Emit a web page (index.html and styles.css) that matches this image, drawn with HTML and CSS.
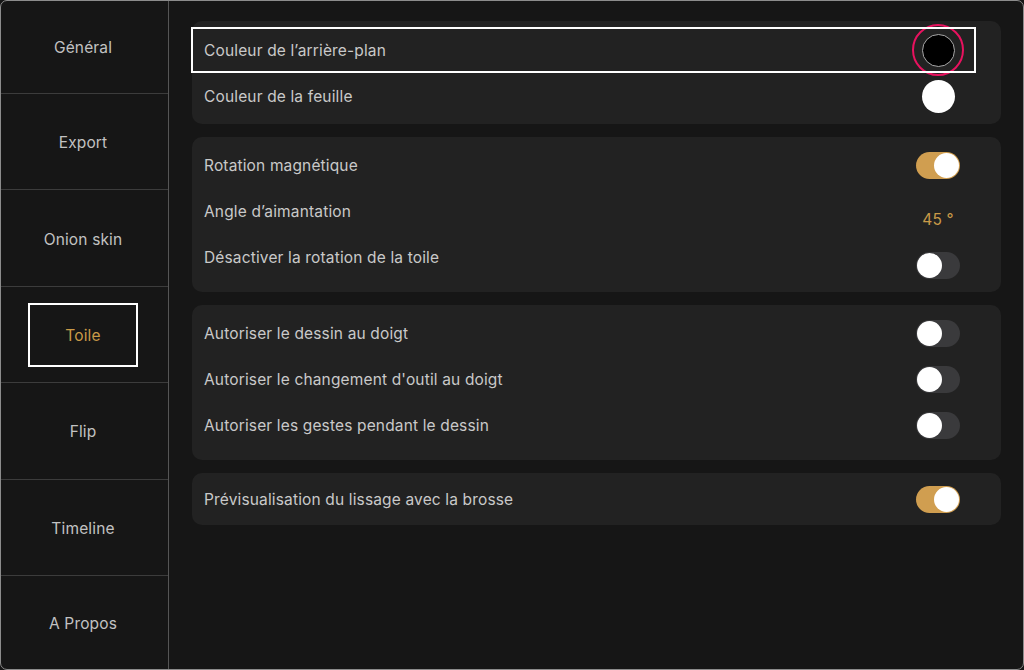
FILE: index.html
```html
<!DOCTYPE html>
<html lang="fr">
<head>
  <meta charset="UTF-8">
  <title>Réglages - Toile</title>
  <meta name="viewport" content="width=device-width, initial-scale=1.0">
  <link rel="stylesheet" href="styles.css">
</head>
<body>
  <div class="screen">
    <nav class="sidebar">
      <div class="tab tab-first"><span>Général</span></div>
      <div class="tab"><span>Export</span></div>
      <div class="tab"><span>Onion skin</span></div>
      <div class="tab tab-active"><span>Toile</span></div>
      <div class="tab"><span>Flip</span></div>
      <div class="tab"><span>Timeline</span></div>
      <div class="tab tab-last"><span>A Propos</span></div>
    </nav>

    <main class="content">
      <section class="group group-colors">
        <div class="row row-focused">
          <span class="label">Couleur de l’arrière-plan</span>
          <span class="control">
            <span class="swatch swatch-black"></span>
            <span class="swatch-ring"></span>
          </span>
          <span class="focus-box"></span>
        </div>
        <div class="row">
          <span class="label">Couleur de la feuille</span>
          <span class="control"><span class="swatch swatch-white"></span></span>
        </div>
      </section>

      <section class="group">
        <div class="row">
          <span class="label">Rotation magnétique</span>
          <span class="control"><span class="toggle on"></span></span>
        </div>
        <div class="row">
          <span class="label">Angle d’aimantation</span>
          <span class="control control-low"><span class="value">45 °</span></span>
        </div>
        <div class="row">
          <span class="label">Désactiver la rotation de la toile</span>
          <span class="control control-low"><span class="toggle"></span></span>
        </div>
      </section>

      <section class="group">
        <div class="row">
          <span class="label">Autoriser le dessin au doigt</span>
          <span class="control"><span class="toggle"></span></span>
        </div>
        <div class="row">
          <span class="label">Autoriser le changement d'outil au doigt</span>
          <span class="control"><span class="toggle"></span></span>
        </div>
        <div class="row">
          <span class="label">Autoriser les gestes pendant le dessin</span>
          <span class="control"><span class="toggle"></span></span>
        </div>
      </section>

      <section class="group group-single">
        <div class="row">
          <span class="label">Prévisualisation du lissage avec la brosse</span>
          <span class="control"><span class="toggle on"></span></span>
        </div>
      </section>
    </main>
  </div>
</body>
</html>
```

FILE: styles.css
```css
html, body {
  margin: 0;
  padding: 0;
  background: #161616;
  font-family: Inter, 'Noto Sans', sans-serif;
}

.screen {
  width: 1024px;
  height: 670px;
  box-sizing: border-box;
  border: 1px solid #8c8c8c;
  border-radius: 7px;
  background: #161616;
  display: flex;
  overflow: hidden;
}

.sidebar {
  width: 167px;
  flex-shrink: 0;
  border-right: 1px solid #555;
  display: flex;
  flex-direction: column;
}

.tab {
  flex: 0 0 96.4px;
  box-sizing: border-box;
  display: flex;
  align-items: center;
  justify-content: center;
  padding: 2px 3px 0 0;
  border-bottom: 1px solid #3c3c3c;
  color: #c2c2c2;
  font-size: 15.5px;
  letter-spacing: 0.15px;
}

.tab-first {
  flex: 0 0 93px;
  padding-top: 0;
}

.tab-last {
  flex: 1;
  border-bottom: none;
}

.tab-active span {
  color: #c99a48;
  width: 110px;
  height: 64px;
  box-sizing: border-box;
  border: 2px solid #fff;
  display: flex;
  align-items: center;
  justify-content: center;
}

.content {
  flex: 1;
  padding: 20px 22px 0 23px;
  display: flex;
  flex-direction: column;
  gap: 13px;
}

.group {
  background: #222;
  border-radius: 10px;
  padding: 5px 0 12px;
}

.group-colors {
  padding: 6px 0 5px;
}

.group-single {
  padding: 3px 0 3px;
}

.row {
  height: 46px;
  display: flex;
  align-items: center;
  padding-left: 12px;
  position: relative;
}

.label {
  flex: 1;
  color: #c9c9c9;
  font-size: 15.5px;
  letter-spacing: 0.15px;
}

.control {
  width: 46px;
  margin-right: 40px;
  display: flex;
  align-items: center;
  justify-content: center;
  position: relative;
}

.control-low {
  margin-top: 17px;
}

.swatch {
  width: 33px;
  height: 33px;
  border-radius: 50%;
  box-sizing: border-box;
}

.swatch-black {
  background: #000;
  border: 1px solid #a8a8a8;
}

.swatch-white {
  background: #fff;
}

.swatch-ring {
  position: absolute;
  left: 50%;
  top: 50%;
  width: 52px;
  height: 52px;
  margin: -26px 0 0 -26px;
  box-sizing: border-box;
  border: 2.5px solid #e8125f;
  border-radius: 50%;
}

.focus-box {
  position: absolute;
  left: -1px;
  top: 0;
  width: 785px;
  height: 46px;
  box-sizing: border-box;
  border: 2px solid #fff;
  pointer-events: none;
}

.value {
  color: #c99a48;
  font-size: 15.5px;
  letter-spacing: 0.15px;
}

.toggle {
  width: 44px;
  height: 27px;
  border-radius: 14px;
  background: #3a3a3c;
  position: relative;
}

.toggle::after {
  content: '';
  position: absolute;
  top: 1px;
  left: 1px;
  width: 25px;
  height: 25px;
  border-radius: 50%;
  background: #fff;
}

.toggle.on {
  background: #d09e50;
}

.toggle.on::after {
  left: 18px;
}
```
